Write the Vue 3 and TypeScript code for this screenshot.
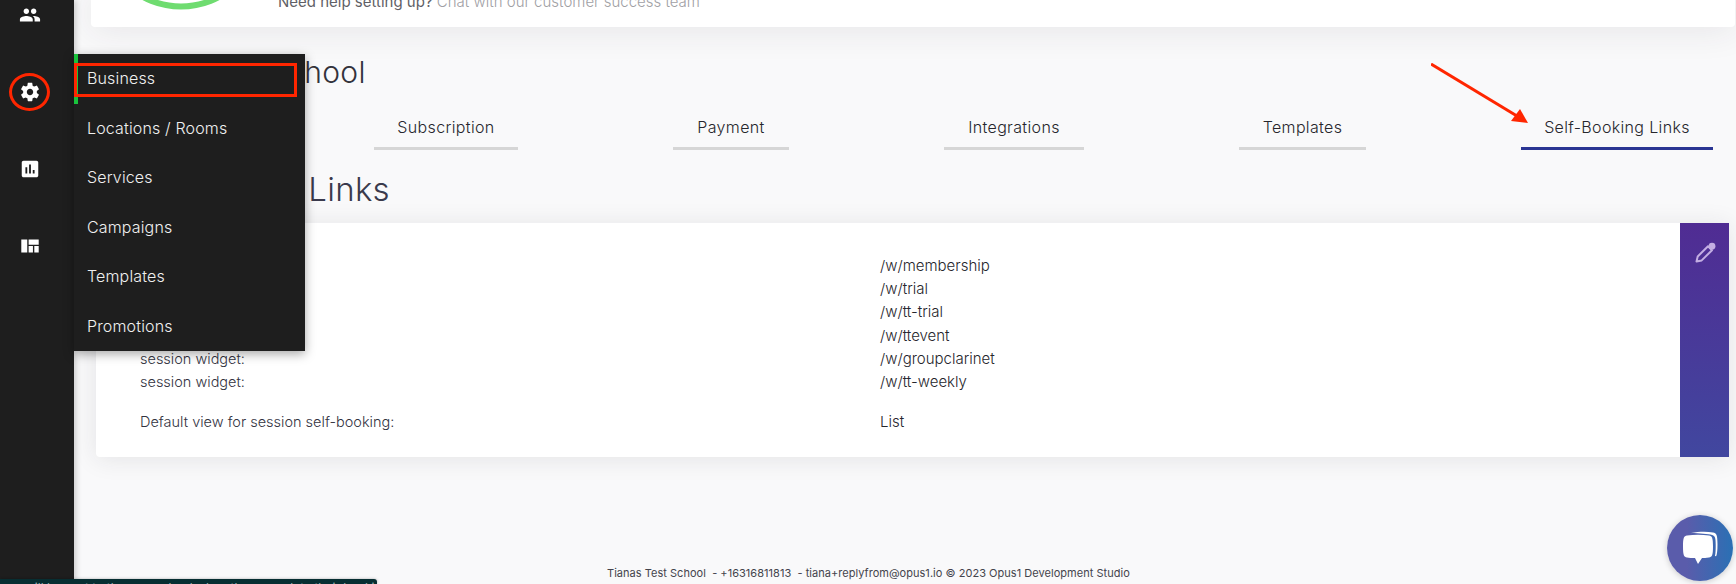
<script setup lang="ts">
interface Tab {
  label: string
  width: number
  active?: boolean
}

interface LinkRow {
  label: string
  path: string
}

const menuItems = ['Business', 'Locations / Rooms', 'Services', 'Campaigns', 'Templates', 'Promotions']

const tabs: Tab[] = [
  { label: 'Subscription', width: 144 },
  { label: 'Payment', width: 116 },
  { label: 'Integrations', width: 140 },
  { label: 'Templates', width: 127 },
  { label: 'Self-Booking Links', width: 192, active: true },
]

const linkRows: LinkRow[] = [
  { label: 'Membership widget:', path: '/w/membership' },
  { label: 'Trial widget:', path: '/w/trial' },
  { label: 'Trial widget:', path: '/w/tt-trial' },
  { label: 'Event widget:', path: '/w/ttevent' },
  { label: 'session widget:', path: '/w/groupclarinet' },
  { label: 'session widget:', path: '/w/tt-weekly' },
]
</script>

<template>
  <div class="page">
    <aside class="rail">
      <div class="rail-slot">
        <svg class="rail-icon" viewBox="0 0 24 24"><path d="M16 11c1.660 0 2.990-1.340 2.990-3S17.660 5 16 5c-1.660 0-3 1.340-3 3s1.340 3 3 3zm-8 0c1.660 0 2.990-1.340 2.990-3S9.660 5 8 5C6.340 5 5 6.340 5 8s1.340 3 3 3zm0 2c-2.330 0-7 1.170-7 3.500V19h14v-2.500c0-2.330-4.670-3.500-7-3.500zm8 0c-.29 0-.62.02-.97.05 1.160.84 1.970 1.970 1.970 3.450V19h6v-2.500c0-2.330-4.670-3.500-7-3.500z" /></svg>
      </div>
      <div class="rail-slot">
        <svg class="rail-icon" viewBox="0 0 24 24"><path d="M19.430 12.980c.04-.32.07-.64.07-.98s-.03-.66-.07-.98l2.110-1.650c.19-.15.24-.42.12-.64l-2-3.460c-.12-.22-.39-.3-.61-.22l-2.490 1c-.52-.4-1.080-.73-1.690-.98l-.38-2.650C14.460 2.180 14.250 2 14 2h-4c-.25 0-.46.18-.49.42l-.38 2.650c-.61.25-1.170.59-1.690.98l-2.490-1c-.23-.09-.49 0-.61.22l-2 3.460c-.13.22-.07.49.12.64l2.110 1.650c-.04.32-.07.65-.07.98s.03.66.07.98l-2.110 1.650c-.19.15-.24.42-.12.64l2 3.460c.12.22.39.3.61.22l2.490-1c.52.4 1.080.73 1.690.98l.38 2.650c.03.24.24.42.49.42h4c.25 0 .46-.18.49-.42l.38-2.650c.61-.25 1.170-.59 1.690-.98l2.490 1c.23.09.49 0 .61-.22l2-3.460c.12-.22.07-.49-.12-.64l-2.110-1.650zM12 15.500c-1.930 0-3.500-1.570-3.500-3.500s1.570-3.500 3.500-3.500 3.500 1.570 3.500 3.500-1.570 3.500-3.500 3.500z" /></svg>
      </div>
      <div class="rail-slot">
        <svg class="rail-icon" viewBox="0 0 24 24"><path d="M19 3H5c-1.100 0-2 .9-2 2v14c0 1.100.9 2 2 2h14c1.100 0 2-.9 2-2V5c0-1.100-.9-2-2-2zM9 17H7v-7h2v7zm4 0h-2V7h2v10zm4 0h-2v-4h2v4z" /></svg>
      </div>
      <div class="rail-slot">
        <svg class="rail-icon" viewBox="0 0 24 24"><path d="M2.500 5h6.500v14H2.500zM10.500 5h11v5.500h-11zM10.500 12H15.200v7H10.500zM16.700 12h4.800v7h-4.800z" /></svg>
      </div>
    </aside>

    <main class="content">
      <section class="setup-card">
        <svg class="setup-ring" width="120" height="27" viewBox="0 0 120 27">
          <circle cx="60" cy="-73.500" r="80" fill="none" stroke="#6fdc70" stroke-width="6" />
        </svg>
        <p class="setup-text"><strong>Need help setting up?</strong> Chat with our customer success team</p>
      </section>

      <h1 class="school-name">Tianas Test School</h1>

      <nav class="tabs">
        <a
          v-for="tab in tabs"
          :key="tab.label"
          class="tab"
          :class="{ active: tab.active }"
          :style="{ width: `${tab.width}px` }"
        >{{ tab.label }}</a>
      </nav>

      <h2 class="section-title">Self-Booking Links</h2>

      <section class="links-card">
        <div class="links-body">
          <div v-for="row in linkRows" :key="row.path" class="link-row">
            <span class="link-label">{{ row.label }}</span>
            <span class="link-value">{{ row.path }}</span>
          </div>
          <div class="link-row default-view">
            <span class="link-label">Default view for session self-booking:</span>
            <span class="link-value">List</span>
          </div>
        </div>
        <div class="edit-panel">
          <svg class="edit-icon" viewBox="0 0 24 24">
            <path d="M3.500 20.500l1.200-5L15 5.200l4 4L8.700 19.400l-5.200 1.100z" fill="none" stroke="#c3aee3" stroke-width="2" stroke-linejoin="round" />
            <circle cx="19" cy="5.200" r="3.400" fill="#c3aee3" />
          </svg>
        </div>
      </section>

      <footer class="footer">Tianas Test School&nbsp; - +16316811813&nbsp; - tiana+replyfrom@opus1.io © 2023 Opus1 Development Studio</footer>
    </main>

    <ul class="fly-menu">
      <li v-for="(item, index) in menuItems" :key="item" class="fly-item" :class="{ current: index === 0 }">{{ item }}</li>
    </ul>

    <!-- screenshot annotations -->
    <div class="mark mark-box"></div>
    <div class="mark mark-ring"></div>
    <svg class="mark mark-arrow" width="100" height="64" viewBox="0 0 100 64">
      <line x1="0" y1="1" x2="86" y2="53" stroke="#ff2600" stroke-width="3" />
      <polygon points="97,60 89,46 80,58" fill="#ff2600" />
    </svg>

    <div class="toast">will be sent to the new school when they complete their booking</div>

    <button class="chat-button" aria-label="Chat">
      <svg width="36" height="36" viewBox="0 0 36 36">
        <path d="M9 3c8-1.500 16-1.500 22-.5 3.500.6 4.500 2 4.500 12 0 6-.5 10-1.500 12-.5-.5-.6-.6-1-.5.6-3 .7-6 .7-11 0-7-.5-9-3.500-10C26 3.800 18 3.500 9 3z" fill="#fff" />
        <path d="M5 5.500c7-1 15-1 22 0 3 .5 4 2 4 11s-1 10.500-4 11c-3 .4-5 .5-7 .6L16 34l-3-5.900c-3 0-6-.2-8-.6-3-.5-4-2-4-11s1-10.500 4-11z" fill="#fff" />
      </svg>
    </button>
  </div>
</template>

<style scoped>
.page {
  position: relative;
  display: flex;
  width: 1736px;
  height: 584px;
  overflow: hidden;
  background: #f9f9fa;
  font-family: Inter, "Open Sans", sans-serif;
  color: #33333c;
}

.rail {
  flex: 0 0 74px;
  display: flex;
  flex-direction: column;
  padding: 0 14px 0 0;
  box-sizing: border-box;
  background: #1e1e1e;
  box-shadow: 2px 0 6px rgba(0, 0, 0, 0.18);
  z-index: 2;
}

.rail-slot {
  flex: 0 0 77px;
  display: flex;
  align-items: center;
  justify-content: center;
}

.rail-slot:first-child {
  margin-top: -23.5px;
}

.rail-icon {
  display: block;
  width: 22px;
  height: 22px;
  fill: #fff;
}

.content {
  flex: 1;
  min-width: 0;
  display: flex;
  flex-direction: column;
  padding: 0 7px 0 22px;
  position: relative;
}

.setup-card {
  flex: none;
  height: 27px;
  margin: 0 -6px 0 -5px;
  display: flex;
  align-items: flex-end;
  background: #fff;
  border-radius: 0 0 4px 4px;
  overflow: hidden;
  box-shadow: 0 0 36px rgba(50, 40, 60, 0.12);
}

.setup-ring {
  flex: none;
  margin-left: 30px;
  align-self: flex-start;
}

.setup-text {
  margin: 0 0 17px 37px;
  font-size: 15px;
  line-height: 17px;
  font-weight: 300;
  color: #a0a0a4;
  white-space: nowrap;
}

.setup-text strong {
  font-weight: 400;
  color: #5f5f66;
}

.school-name {
  margin: 27px 0 0;
  height: 36px;
  font-size: 30px;
  line-height: 36px;
  font-weight: 300;
  letter-spacing: 0.35px;
  color: #33333c;
}

.tabs {
  display: flex;
  justify-content: flex-end;
  gap: 155px;
  margin: 20px 16px 0 0;
}

.tab {
  display: block;
  height: 40px;
  line-height: 35px;
  box-sizing: border-box;
  text-align: center;
  font-size: 16px;
  font-weight: 300;
  letter-spacing: 0.35px;
  color: #26262c;
  white-space: nowrap;
  border-bottom: 3px solid #d6d6d6;
}

.tab.active {
  border-bottom-color: #2a3593;
}

.section-title {
  margin: 20px 0 0;
  height: 38px;
  font-size: 33px;
  line-height: 38px;
  font-weight: 300;
  letter-spacing: 0.3px;
  text-indent: 1px;
  color: #3a3a4c;
}

.links-card {
  display: flex;
  height: 234px;
  margin-top: 15px;
  background: #fff;
  border-radius: 4px 0 0 4px;
  box-shadow: 0 2px 24px rgba(40, 40, 50, 0.1);
}

.links-body {
  flex: 1;
  padding: 31px 0 0 44px;
}

.link-row {
  display: grid;
  grid-template-columns: 740px 1fr;
  height: 23.2px;
  line-height: 23.2px;
  font-size: 14.5px;
  font-weight: 300;
}

.link-row.default-view {
  margin-top: 17px;
}

.link-label {
  color: #33333f;
}

.link-value {
  font-size: 15px;
  color: #26262c;
}

.edit-panel {
  flex: 0 0 49px;
  display: flex;
  justify-content: center;
  padding-top: 18px;
  box-sizing: border-box;
  background: linear-gradient(180deg, #502c93, #41479f);
}

.edit-icon {
  width: 24px;
  height: 24px;
}

.footer {
  margin-top: auto;
  padding: 0 0 3px 511px;
  font-size: 11px;
  line-height: 16px;
  letter-spacing: 0.03px;
  color: #44444c;
  white-space: nowrap;
}

.fly-menu {
  position: absolute;
  left: 74px;
  top: 54px;
  width: 231px;
  height: 297px;
  margin: 0;
  padding: 0;
  list-style: none;
  background: #1e1e1e;
  box-shadow: 0 3px 10px rgba(0, 0, 0, 0.35);
  z-index: 3;
}

.fly-item {
  height: 49.5px;
  line-height: 49.5px;
  padding-left: 13px;
  box-sizing: border-box;
  font-size: 16px;
  font-weight: 300;
  letter-spacing: 0.15px;
  color: #f0f0f0;
}

.fly-item.current {
  border-left: 4px solid #19c33c;
  padding-left: 9px;
}

.mark {
  position: absolute;
  z-index: 4;
  pointer-events: none;
}

.mark-box {
  left: 74px;
  top: 63px;
  width: 223px;
  height: 34px;
  box-sizing: border-box;
  border: 3px solid #ff2600;
}

.mark-ring {
  left: 9px;
  top: 73px;
  width: 41px;
  height: 38px;
  box-sizing: border-box;
  border: 3px solid #ff2600;
  border-radius: 50%;
}

.mark-arrow {
  left: 1431px;
  top: 63px;
}

.toast {
  position: absolute;
  left: 0;
  bottom: 0;
  width: 377px;
  height: 5px;
  overflow: hidden;
  padding-left: 25px;
  box-sizing: border-box;
  background: #072e32;
  color: #9fb6ba;
  font-size: 12px;
  line-height: 17px;
  white-space: nowrap;
  border-radius: 0 3px 0 0;
  box-shadow: 0 0 3px rgba(0, 0, 0, 0.3);
  z-index: 5;
}

.chat-button {
  position: absolute;
  left: 1667px;
  top: 515px;
  width: 66px;
  height: 66px;
  padding: 0;
  display: flex;
  align-items: center;
  justify-content: center;
  border: 0;
  border-radius: 50%;
  background: linear-gradient(90deg, #5a5cab 30%, #2a70b4);
  box-shadow: 0 1px 6px rgba(0, 0, 0, 0.2);
  z-index: 4;
}
</style>
